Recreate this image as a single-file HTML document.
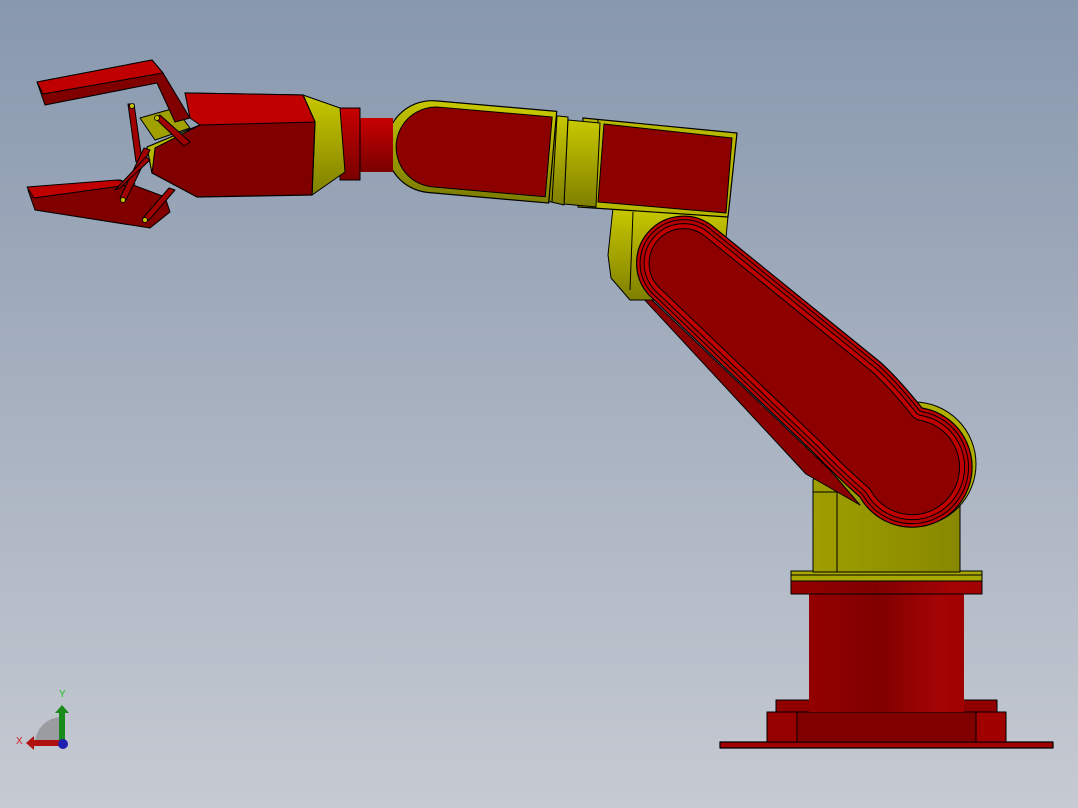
<!DOCTYPE html>
<html><head><meta charset="utf-8"><style>
html,body{margin:0;padding:0;width:1078px;height:808px;overflow:hidden}
svg{display:block}
</style></head><body>
<svg width="1078" height="808" viewBox="0 0 1078 808" xmlns="http://www.w3.org/2000/svg" stroke-linejoin="round">
<defs>
<linearGradient id="bg" x1="0" y1="0" x2="0" y2="1">
<stop offset="0" stop-color="#8898ae"/><stop offset="1" stop-color="#c6cad2"/>
</linearGradient>
<linearGradient id="cyl" x1="0" y1="0" x2="1" y2="0">
<stop offset="0" stop-color="#940000"/><stop offset="0.45" stop-color="#800000"/><stop offset="0.85" stop-color="#a50404"/><stop offset="1" stop-color="#a00000"/>
</linearGradient>
<linearGradient id="shaft" x1="0" y1="0" x2="0" y2="1">
<stop offset="0" stop-color="#c80000"/><stop offset="0.5" stop-color="#a00000"/><stop offset="1" stop-color="#7a0000"/>
</linearGradient>
<linearGradient id="yv" x1="0" y1="0" x2="0" y2="1">
<stop offset="0" stop-color="#c8c800"/><stop offset="1" stop-color="#7f7f00"/>
</linearGradient>
<linearGradient id="yh" x1="0" y1="0" x2="1" y2="0">
<stop offset="0" stop-color="#a0a000"/><stop offset="1" stop-color="#888800"/>
</linearGradient>
<path id="arm" d="M711,225 L880,362 Q898,378 922,408 A60,60 0 1 1 860,497 Q835,475 813,452 L649,295 A47,47 0 0 1 711,225 Z"/>
<clipPath id="armclip"><use href="#arm"/></clipPath>
</defs>
<rect width="1078" height="808" fill="url(#bg)"/>

<!-- BASE -->
<rect x="720" y="742" width="333" height="6" fill="#a00000" stroke="#000" stroke-width="1.2"/>
<rect x="767" y="712" width="239" height="30" fill="#800000" stroke="#000" stroke-width="1"/>
<rect x="767" y="712" width="30" height="30" fill="#960000" stroke="#000" stroke-width="1"/>
<rect x="976" y="712" width="30" height="30" fill="#a00000" stroke="#000" stroke-width="1"/>
<rect x="776" y="700" width="41" height="12" fill="#900000" stroke="#000" stroke-width="1"/>
<rect x="958" y="700" width="39" height="12" fill="#900000" stroke="#000" stroke-width="1"/>
<rect x="809" y="594" width="155" height="118" fill="url(#cyl)"/>
<rect x="791" y="581" width="191" height="13" fill="url(#cyl)" stroke="#000" stroke-width="1"/>
<rect x="791" y="571" width="191" height="10" fill="#a8a800" stroke="#000" stroke-width="1"/>
<line x1="791" y1="575" x2="982" y2="575" stroke="#000" stroke-width="1"/>

<!-- yellow column -->
<polygon points="800,447 823,470 813,480 813,572 960,572 960,470 930,430" fill="url(#yh)" stroke="#000" stroke-width="1"/>
<line x1="837" y1="490" x2="837" y2="572" stroke="#000" stroke-width="1"/>
<line x1="813" y1="492" x2="837" y2="492" stroke="#000" stroke-width="1"/>
<circle cx="914" cy="464" r="62" fill="#b0b000" stroke="#000" stroke-width="1"/>

<!-- main arm side face -->
<polygon points="628,282 652,300 830,470 860,505 806,474" fill="#8a0000" stroke="#000" stroke-width="1"/>
<!-- elbow yellow -->
<polygon points="613,208 728,216 726,238 660,300 630,300 611,278 608,255" fill="url(#yv)" stroke="#000" stroke-width="1"/>
<line x1="633" y1="212" x2="630" y2="290" stroke="#000" stroke-width="1"/>

<!-- main arm -->
<use href="#arm" fill="#8e0000"/>
<g clip-path="url(#armclip)" fill="none">
<use href="#arm" stroke="#000" stroke-width="26"/>
<use href="#arm" stroke="#c00000" stroke-width="24"/>
<use href="#arm" stroke="#000" stroke-width="16"/>
<use href="#arm" stroke="#b00000" stroke-width="14"/>
<use href="#arm" stroke="#000" stroke-width="8"/>
<use href="#arm" stroke="#c00000" stroke-width="6"/>
</g>
<use href="#arm" fill="none" stroke="#000" stroke-width="1.2"/>

<!-- upper block -->
<polygon points="583,118 737,133 728,217 578,207" fill="#b8b800" stroke="#000" stroke-width="1.2"/>
<polygon points="604,124 732,138 726,213 598,202" fill="#8c0000" stroke="#000" stroke-width="1"/>
<line x1="598" y1="120" x2="592" y2="208" stroke="#000" stroke-width="1"/>

<!-- yellow cylinder between -->
<polygon points="568,120 600,123 596,207 564,204" fill="url(#yv)" stroke="#000" stroke-width="1"/>
<polygon points="548,115 568,117 564,205 543,200" fill="url(#yv)" stroke="#000" stroke-width="1"/>
<line x1="557" y1="116" x2="552" y2="202" stroke="#000" stroke-width="1"/>

<!-- forearm link -->
<g transform="rotate(5 470 150)">
<path d="M432,104 L553,104 L553,196 L432,196 A46,46 0 0 1 432,104 Z" fill="url(#yv)" stroke="#000" stroke-width="1.2"/>
<path d="M436,110 L549,110 L549,190 L436,190 A40,40 0 0 1 436,110 Z" fill="#8c0000" stroke="#000" stroke-width="1"/>
</g>

<!-- shaft & collar -->
<rect x="357" y="118" width="36" height="54" fill="url(#shaft)"/>
<rect x="340" y="108" width="20" height="72" fill="url(#shaft)" stroke="#000" stroke-width="1"/>
<!-- yellow cone -->
<polygon points="303,95 340,108 345,172 312,195 315,122" fill="url(#yv)" stroke="#000" stroke-width="1"/>
<!-- wrist block -->
<polygon points="185,93 303,95 315,122 312,195 197,197 152,173 147,147 200,125" fill="#800000" stroke="#000" stroke-width="1.2"/>
<polygon points="185,93 303,95 315,122 200,125 190,118" fill="#c00000" stroke="#000" stroke-width="1"/>
<polygon points="200,125 147,147 152,173 155,148" fill="#b8b800" stroke="#000" stroke-width="1"/>
<!-- yellow window -->
<polygon points="140,118 175,108 190,128 155,140" fill="#a0a000" stroke="#000" stroke-width="1"/>

<!-- upper finger -->
<polygon points="37,82 152,60 163,73 190,118 175,122 157,83 45,105" fill="#800000" stroke="#000" stroke-width="1"/>
<polygon points="37,82 152,60 163,73 43,94" fill="#c00000" stroke="#000" stroke-width="1"/>
<!-- lower finger -->
<polygon points="28,190 120,180 165,197 170,212 150,228 35,210" fill="#800000" stroke="#000" stroke-width="1"/>
<polygon points="27,187 117,180 135,184 34,198" fill="#c00000" stroke="#000" stroke-width="1"/>
<!-- links -->
<g stroke="#000" stroke-width="1" fill="#a00000">
<polygon points="128,104 134,104 142,160 136,162"/>
<polygon points="155,118 160,115 190,142 184,146"/>
<polygon points="120,198 126,200 150,150 144,148"/>
<polygon points="143,218 149,220 175,190 169,188"/>
<polygon points="115,190 120,188 150,160 146,157"/>
</g>
<g fill="#c0c000" stroke="#000" stroke-width="0.8">
<circle cx="132" cy="106" r="2.5"/><circle cx="157" cy="118" r="2.5"/>
<circle cx="123" cy="200" r="2.5"/><circle cx="145" cy="220" r="2.5"/>
</g>

<!-- axis triad -->
<path d="M62,744 L35,744 A27,27 0 0 1 62,717 Z" fill="#9a9ca2"/>
<rect x="59" y="712" width="6" height="32" fill="#1a8a1a"/>
<polygon points="55,713 62,705 69,713" fill="#1a8a1a"/>
<rect x="34" y="740" width="28" height="6" fill="#b01010"/>
<polygon points="34,736 26,743 34,750" fill="#b01010"/>
<circle cx="63" cy="744" r="5" fill="#2020b0"/>
<text x="59" y="697" font-family="Liberation Sans, sans-serif" font-size="10" fill="#20c020">Y</text>
<text x="16" y="744" font-family="Liberation Sans, sans-serif" font-size="10" fill="#d02020">X</text>
</svg>
</body></html>
